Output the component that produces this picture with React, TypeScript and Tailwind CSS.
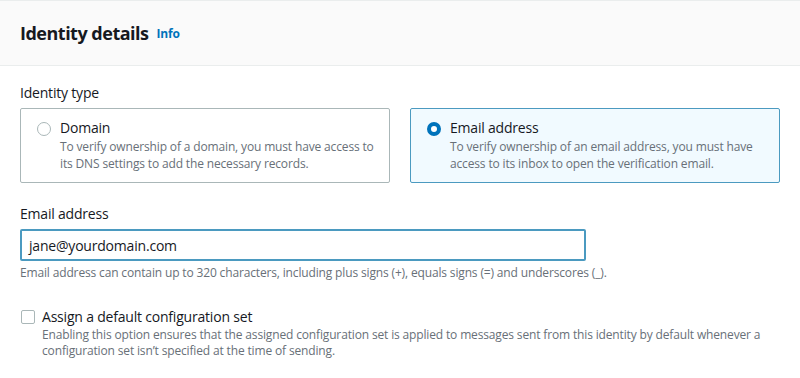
import React from "react";

export default function App() {
  return (
    <div
      className="w-[800px] h-[378px] bg-white text-[#16191f] overflow-hidden"
      style={{ fontFamily: '"Open Sans", "Noto Sans", Arial, sans-serif' }}
    >
      <div className="h-[66px] bg-[#fafafa] border-t border-b border-[#eaeded] px-5 flex items-center">
        <h2 className="text-[18px] font-bold leading-[22px] tracking-[-0.5px] -mt-[1px]">Identity details</h2>
        <span className="ml-[8px] text-[12px] font-bold text-[#0073bb] tracking-[-0.2px] mt-[1px]">Info</span>
      </div>

      <div className="px-5 pt-[17px] tracking-[-0.2px]">
        <div className="text-[14px] leading-[20px] mb-[5px]">Identity type</div>
        <div className="grid grid-cols-2 gap-5">
          <div className="h-[75px] border border-[#aab7b8] rounded-[2px] pl-4 pr-3 pt-[9px] flex">
            <div className="w-[14px] h-[14px] rounded-full border border-[#aab7b8] mt-[4px] shrink-0 bg-white" />
            <div className="ml-[9px]">
              <div className="text-[14px] leading-[20px]">Domain</div>
              <div className="text-[12px] leading-[17px] text-[#687078] tracking-[-0.15px]">
                To verify ownership of a domain, you must have access to its DNS settings to add the necessary records.
              </div>
            </div>
          </div>
          <div className="h-[75px] border border-[#4b9ac0] bg-[#f1faff] rounded-[2px] pl-4 pr-3 pt-[9px] flex">
            <div className="w-[14px] h-[14px] rounded-full border-[4px] border-[#0073bb] bg-white mt-[4px] shrink-0" />
            <div className="ml-[9px]">
              <div className="text-[14px] leading-[20px]">Email address</div>
              <div className="text-[12px] leading-[17px] text-[#687078] tracking-[-0.15px]">
                To verify ownership of an email address, you must have access to its inbox to open the verification email.
              </div>
            </div>
          </div>
        </div>

        <div className="mt-[21px] text-[14px] leading-[20px]">Email address</div>
        <div className="mt-[5px] w-[566px] h-[32px] border-2 border-[#4b9ac0] rounded-[2px] flex items-center px-[7px] text-[14px]">
          jane@yourdomain.com
        </div>
        <div className="mt-[3px] text-[12px] leading-[17px] text-[#687078] tracking-[-0.15px]">
          Email address can contain up to 320 characters, including plus signs (+), equals signs (=) and underscores (_).
        </div>

        <div className="mt-[26px] flex">
          <div className="w-[14px] h-[14px] border border-[#aab7b8] rounded-[2px] mt-[3px] ml-[1px] shrink-0" />
          <div className="ml-[7px]">
            <div className="text-[14px] leading-[20px]">Assign a default configuration set</div>
            <div className="text-[12px] leading-[16px] text-[#687078] tracking-[-0.15px]">
              Enabling this option ensures that the assigned configuration set is applied to messages sent from this identity by default whenever a configuration set isn’t specified at the time of sending.
            </div>
          </div>
        </div>
      </div>
    </div>
  );
}
